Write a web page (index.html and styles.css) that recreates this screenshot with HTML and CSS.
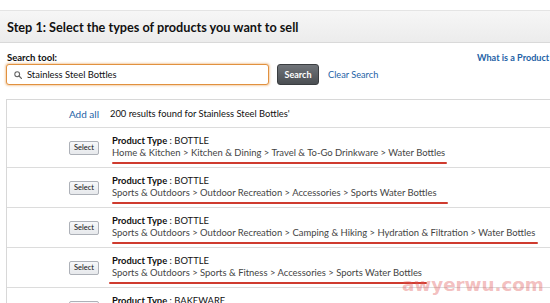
FILE: index.html
```html
<!DOCTYPE html>
<html>
<head>
<meta charset="utf-8">
<link rel="stylesheet" href="styles.css">
</head>
<body>
<div class="page">
  <div class="header"><h1>Step 1: Select the types of products you want to sell</h1></div>
  <div class="search-area">
    <div class="search-left">
      <div class="label">Search tool:</div>
      <div class="search-row">
        <div class="input">
          <svg class="mag" width="8" height="8" viewBox="0 0 8 8"><circle cx="3.2" cy="3.2" r="2.4" fill="none" stroke="#666" stroke-width="1.1"/><line x1="5" y1="5" x2="7.4" y2="7.4" stroke="#666" stroke-width="1.3" stroke-linecap="round"/></svg>
          <span>Stainless Steel Bottles</span>
        </div>
        <button class="btn-search">Search</button>
        <a class="link clear">Clear Search</a>
      </div>
    </div>
    <a class="link what">What is a Product Type?</a>
  </div>
  <div class="table">
    <div class="row head">
      <div class="cell-l"><a class="link addall">Add all</a></div>
      <div class="cell-r results">200 results found for Stainless Steel Bottles'</div>
    </div>
    <div class="row">
      <div class="cell-l"><button class="btn-select">Select</button></div>
      <div class="cell-r">
        <div class="ptype"><b>Product Type</b> : BOTTLE</div>
        <div class="cat">Home &amp; Kitchen &gt; Kitchen &amp; Dining &gt; Travel &amp; To-Go Drinkware &gt; Water Bottles</div>
        <div class="mark" style="width:335px"></div>
      </div>
    </div>
    <div class="row">
      <div class="cell-l"><button class="btn-select">Select</button></div>
      <div class="cell-r">
        <div class="ptype"><b>Product Type</b> : BOTTLE</div>
        <div class="cat">Sports &amp; Outdoors &gt; Outdoor Recreation &gt; Accessories &gt; Sports Water Bottles</div>
        <div class="mark" style="width:336px"></div>
      </div>
    </div>
    <div class="row">
      <div class="cell-l"><button class="btn-select">Select</button></div>
      <div class="cell-r">
        <div class="ptype"><b>Product Type</b> : BOTTLE</div>
        <div class="cat">Sports &amp; Outdoors &gt; Outdoor Recreation &gt; Camping &amp; Hiking &gt; Hydration &amp; Filtration &gt; Water Bottles</div>
        <div class="mark" style="width:426px"></div>
      </div>
    </div>
    <div class="row">
      <div class="cell-l"><button class="btn-select">Select</button></div>
      <div class="cell-r">
        <div class="ptype"><b>Product Type</b> : BOTTLE</div>
        <div class="cat">Sports &amp; Outdoors &gt; Sports &amp; Fitness &gt; Accessories &gt; Sports Water Bottles</div>
        <div class="mark mark-left" style="width:318px"></div>
      </div>
    </div>
    <div class="row">
      <div class="cell-l"><button class="btn-select">Select</button></div>
      <div class="cell-r">
        <div class="ptype"><b>Product Type</b> : BAKEWARE</div>
        <div class="cat">Home &amp; Kitchen &gt; Kitchen &amp; Dining &gt; Bakeware</div>
      </div>
    </div>
  </div>
  <div class="watermark">awyerwu.com</div>
</div>
</body>
</html>
```

FILE: styles.css
```css
html, body {
  margin: 0;
  padding: 0;
  background: #fff;
}
body {
  width: 550px;
  height: 303px;
  overflow: hidden;
  font-family: Lato, "Open Sans", sans-serif;
  color: #111;
}
.page {
  position: relative;
  width: 550px;
  height: 303px;
  overflow: hidden;
}
.header {
  margin-top: 10px;
  height: 33px;
  box-sizing: border-box;
  background: linear-gradient(#f6f6f6, #ececec);
  border-top: 1px solid #e4e4e4;
  border-bottom: 1px solid #d9d9d9;
  display: flex;
  align-items: center;
  padding-left: 7px;
}
.header h1 {
  margin: 0;
  font-size: 12.7px;
  font-weight: 700;
  color: #111;
  white-space: nowrap;
}
.search-area {
  display: flex;
  height: 56px;
  box-sizing: border-box;
  padding: 9px 0 0 6px;
  white-space: nowrap;
}
.search-left {
  width: 471px;
  flex: none;
}
.label {
  font-size: 9.5px;
  font-weight: 700;
  line-height: 12px;
  padding-left: 1px;
  color: #111;
}
.search-row {
  display: flex;
  align-items: center;
}
.input {
  width: 263px;
  height: 21px;
  box-sizing: border-box;
  border: 1px solid #e1913f;
  border-radius: 3px;
  box-shadow: 0 0 2px 1px rgba(228, 150, 70, 0.45);
  display: flex;
  align-items: center;
  padding-left: 7px;
  font-size: 9.4px;
  color: #111;
  background: #fff;
}
.mag {
  margin-right: 5px;
}
.btn-search {
  margin-left: 8px;
  width: 42px;
  height: 21px;
  box-sizing: border-box;
  background: linear-gradient(#707479, #4a4e52);
  border: 1px solid #3a3d40;
  border-radius: 3px;
  color: #fff;
  font-family: Lato, sans-serif;
  font-weight: 700;
  font-size: 9px;
  padding: 0;
}
.link {
  color: #2462a6;
  text-decoration: none;
}
.clear {
  margin-left: 9px;
  font-size: 9.2px;
}
.what {
  font-size: 9.1px;
  font-weight: 700;
  line-height: 12px;
  flex: none;
}
.table {
  margin-left: 6px;
  border-left: 1px solid #d8d8d8;
  border-top: 1px solid #d8d8d8;
}
.row {
  display: grid;
  grid-template-columns: 98px 1fr;
  height: 40px;
  box-sizing: border-box;
  border-bottom: 1px solid #dcdcdc;
  white-space: nowrap;
}
.row.head {
  height: 28px;
  align-items: center;
}
.cell-l {
  display: flex;
  justify-content: flex-end;
  align-items: center;
  padding-right: 6px;
}
.cell-r {
  padding-left: 7px;
  padding-top: 7px;
}
.head .cell-r {
  padding-top: 0;
  padding-left: 5px;
}
.addall {
  font-size: 10px;
}
.results {
  font-size: 9.35px;
  color: #111;
}
.btn-select {
  width: 30px;
  height: 14px;
  box-sizing: border-box;
  padding: 0;
  background: linear-gradient(#f7f8fa, #e7e9ec);
  border: 1px solid #adb1b8;
  border-radius: 2px;
  font-family: Lato, sans-serif;
  font-size: 7.5px;
  color: #111;
}
.ptype {
  font-size: 9.4px;
  line-height: 12px;
  color: #111;
}
.ptype b {
  font-weight: 700;
}
.cat {
  font-size: 9.45px;
  line-height: 12px;
  color: #444;
}
.mark {
  height: 2px;
  background: #cf3b2e;
  margin-top: 3px;
  border-radius: 1px;
}
.mark-left {
  margin-left: -3px;
}
.watermark {
  position: absolute;
  left: 402px;
  top: 274px;
  font-family: "DejaVu Sans", sans-serif;
  font-weight: 700;
  font-size: 18.3px;
  color: rgba(225, 90, 90, 0.4);
}
```
